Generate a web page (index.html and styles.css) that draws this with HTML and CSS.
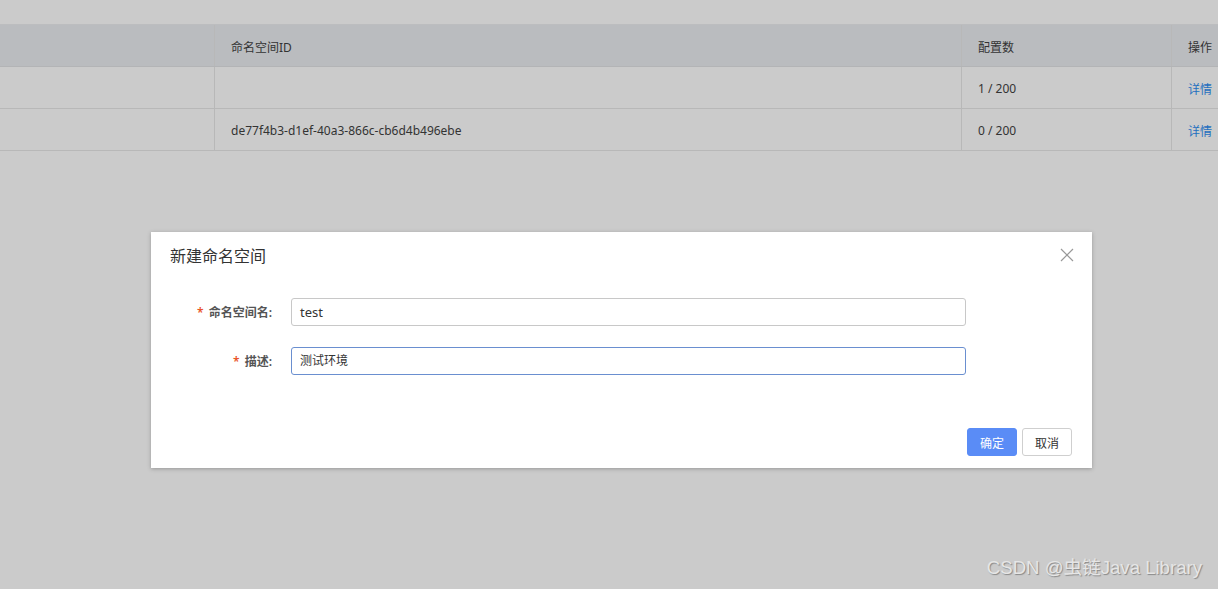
FILE: index.html
```html
<!DOCTYPE html>
<html lang="zh">
<head>
<meta charset="utf-8">
<title>新建命名空间</title>
<link rel="stylesheet" href="styles.css">
</head>
<body>
<div class="page">
  <div class="table">
    <div class="row head">
      <div class="cell"></div>
      <div class="cell">命名空间ID</div>
      <div class="cell">配置数</div>
      <div class="cell">操作</div>
    </div>
    <div class="row">
      <div class="cell"></div>
      <div class="cell"></div>
      <div class="cell">1 / 200</div>
      <div class="cell"><a class="link">详情</a></div>
    </div>
    <div class="row">
      <div class="cell"></div>
      <div class="cell">de77f4b3-d1ef-40a3-866c-cb6d4b496ebe</div>
      <div class="cell">0 / 200</div>
      <div class="cell"><a class="link">详情</a></div>
    </div>
  </div>
</div>

<div class="dialog">
  <div class="dialog-head">
    <span class="dialog-title">新建命名空间</span>
    <svg class="close" width="14" height="14" viewBox="0 0 14 14"><path d="M1 1L13 13M13 1L1 13" stroke="#999" stroke-width="1.2" fill="none"/></svg>
  </div>
  <div class="dialog-body">
    <div class="form-row">
      <label class="label"><span class="req">*</span> 命名空间名:</label>
      <div class="input latin">test</div>
    </div>
    <div class="form-row">
      <label class="label"><span class="req">*</span> 描述:</label>
      <div class="input focus">测试环境</div>
    </div>
  </div>
  <div class="dialog-foot">
    <button class="btn primary">确定</button>
    <button class="btn">取消</button>
  </div>
</div>

<div class="watermark">CSDN @虫链Java Library</div>
</body>
</html>
```
FILE: styles.css
```css
html, body {
  margin: 0;
  padding: 0;
  height: 100%;
  background: #cbcbcb;
  font-family: "Noto Sans", "Noto Sans CJK SC", sans-serif;
  color: #333;
  overflow: hidden;
}

.page {
  padding-top: 24px;
}

.table {
  border-top: 1px solid #bcbdbf;
  width: 1218px;
}

.row {
  display: grid;
  grid-template-columns: 214px 747px 210px 1fr;
  height: 41px;
  border-bottom: 1px solid #b8b8b8;
  font-size: 12px;
}

.row.head {
  background: #babcbf;
  border-bottom-color: #b3b4b6;
}

.cell {
  display: flex;
  align-items: center;
  padding: 2px 0 0 16px;
  border-left: 1px solid #b8b8b8;
  white-space: nowrap;
  overflow: hidden;
}

.cell:first-child {
  border-left: none;
}

.link {
  color: #1f6fbf;
}

.dialog {
  position: absolute;
  left: 151px;
  top: 232px;
  width: 941px;
  height: 236px;
  background: #fff;
  box-shadow: 0 1px 4px rgba(0, 0, 0, 0.25);
  display: flex;
  flex-direction: column;
}

.dialog-head {
  display: flex;
  align-items: center;
  justify-content: space-between;
  padding: 13px 18px 0 19px;
  height: 20px;
}

.dialog-title {
  font-family: "Noto Sans CJK SC", sans-serif;
  font-size: 16px;
  color: #333;
  line-height: 20px;
}

.close {
  display: block;
}

.dialog-body {
  padding-top: 33px;
  display: flex;
  flex-direction: column;
  gap: 21px;
}

.form-row {
  display: flex;
  align-items: center;
}

.label {
  width: 121px;
  text-align: right;
  font-size: 12px;
  font-weight: 600;
  color: #555;
  margin-right: 19px;
}

.req {
  color: #e9542a;
  margin-right: 2px;
}

.input {
  width: 658px;
  height: 26px;
  border: 1px solid #c8c8c8;
  border-radius: 3px;
  padding: 0 7px 0 8px;
  font-size: 12px;
  line-height: 26px;
  color: #333;
}

.input.latin {
  font-size: 13px;
}

.input.focus {
  border-color: #6a8fd0;
}

.dialog-foot {
  margin-top: auto;
  display: flex;
  justify-content: flex-end;
  gap: 5px;
  padding: 0 20px 12px 0;
}

.btn {
  width: 50px;
  height: 28px;
  border: 1px solid #cfcfcf;
  border-radius: 3px;
  background: #fff;
  font-family: "Noto Sans CJK SC", sans-serif;
  font-size: 12px;
  color: #333;
  padding: 0;
}

.btn.primary {
  background: #5a8cf6;
  border-color: #5a8cf6;
  color: #fff;
}

.watermark {
  position: absolute;
  right: 16px;
  bottom: 10px;
  font-family: "Liberation Sans", "Noto Sans CJK SC", sans-serif;
  font-size: 18.6px;
  color: #e6e6e6;
  text-shadow: 1px 1px 1px #888;
}
```
